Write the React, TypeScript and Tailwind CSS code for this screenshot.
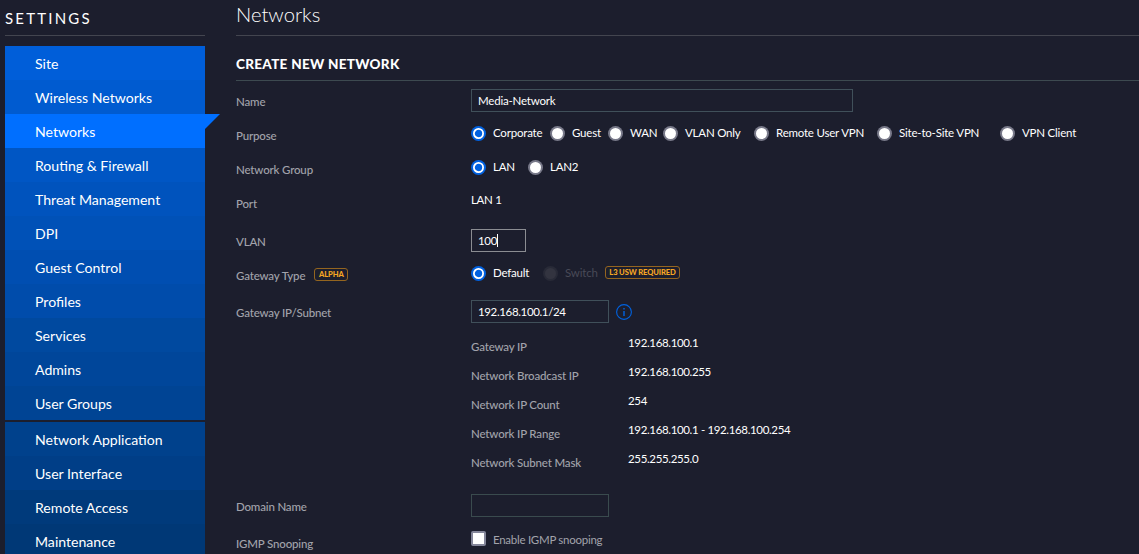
import type { ReactNode } from "react";

const siteItems = [
  { label: "Site", bg: "bg-[#005ed9]" },
  { label: "Wireless Networks", bg: "bg-[#005bd0]" },
  { label: "Networks", bg: "bg-[#006fff]", active: true },
  { label: "Routing & Firewall", bg: "bg-[#0056c4]" },
  { label: "Threat Management", bg: "bg-[#0053bd]" },
  { label: "DPI", bg: "bg-[#0051b7]" },
  { label: "Guest Control", bg: "bg-[#004eb1]" },
  { label: "Profiles", bg: "bg-[#004cab]" },
  { label: "Services", bg: "bg-[#00499f]" },
  { label: "Admins", bg: "bg-[#00469a]" },
  { label: "User Groups", bg: "bg-[#004494]" },
];

const controllerItems = [
  { label: "Network Application", bg: "bg-[#00418c]" },
  { label: "User Interface", bg: "bg-[#003e87]" },
  { label: "Remote Access", bg: "bg-[#003a7b]" },
  { label: "Maintenance", bg: "bg-[#003876]" },
];

function MenuItem({ label, bg, active }: { label: string; bg: string; active?: boolean }) {
  return (
    <a className={`relative flex h-[34px] items-center pl-[30px] pt-[3px] text-[14.1px] leading-none text-white ${bg}`}>
      {label}
      {active && (
        <svg className="absolute left-full top-0" width="15" height="15" viewBox="0 0 15 15">
          <path d="M0 0H15L0 15Z" fill="#006fff" />
        </svg>
      )}
    </a>
  );
}

function Row({ label, height, badge, children }: { label: string; height: string; badge?: string; children?: ReactNode }) {
  return (
    <div className={`flex items-start ${height}`}>
      <div className="flex h-[34px] w-[235px] shrink-0 items-center text-[11.5px] font-medium tracking-[-0.17px] text-[#a2a3ab]">
        <span>{label}</span>
        {badge && <Badge className="ml-[9px] -mt-[3px] w-[34px]">{badge}</Badge>}
      </div>
      {children}
    </div>
  );
}

function Badge({ className, children }: { className: string; children: ReactNode }) {
  return (
    <span className={`flex h-[13px] shrink-0 items-center justify-center whitespace-nowrap rounded-[3px] border border-[#94651f] pt-px text-[7.6px] font-black leading-none tracking-[-0.12px] text-[#f5a623] ${className}`}>
      {children}
    </span>
  );
}

function Radio({ label, width, checked, disabled }: { label: string; width: string; checked?: boolean; disabled?: boolean }) {
  return (
    <label className={`flex shrink-0 items-center text-[11.5px] tracking-[-0.2px] ${disabled ? "text-[#494a57]" : "text-white"} ${width}`}>
      <svg className="mr-[7px] shrink-0" width="15" height="15" viewBox="0 0 15 15">
        {checked ? (
          <>
            <circle cx="7.5" cy="7.5" r="7.5" fill="#0061e0" />
            <circle cx="7.5" cy="7.5" r="4.6" fill="none" stroke="#fff" strokeWidth="1.8" />
          </>
        ) : disabled ? (
          <>
            <circle cx="7.5" cy="7.5" r="7.5" fill="#282a37" />
            <circle cx="7.5" cy="7.5" r="5.5" fill="#333440" />
          </>
        ) : (
          <>
            <circle cx="7.5" cy="7.5" r="7.5" fill="#787989" />
            <circle cx="7.5" cy="7.5" r="5.5" fill="#fff" />
          </>
        )}
      </svg>
      <span className="whitespace-nowrap">{label}</span>
    </label>
  );
}

function Field({ value, className, caret }: { value: string; className: string; caret?: boolean }) {
  return (
    <div className={`mt-[4px] flex h-[23px] shrink-0 items-center border pl-[6px] text-[11.5px] text-white ${className}`}>
      <span>{value}</span>
      {caret && <span className="h-[13px] w-px bg-white" />}
    </div>
  );
}

const purposes = [
  { label: "Corporate", width: "w-[79px]", checked: true },
  { label: "Guest", width: "w-[58px]" },
  { label: "WAN", width: "w-[55px]" },
  { label: "VLAN Only", width: "w-[91px]" },
  { label: "Remote User VPN", width: "w-[123px]" },
  { label: "Site-to-Site VPN", width: "w-[123px]" },
  { label: "VPN Client", width: "w-[100px]" },
];

const details = [
  ["Gateway IP", "192.168.100.1"],
  ["Network Broadcast IP", "192.168.100.255"],
  ["Network IP Count", "254"],
  ["Network IP Range", "192.168.100.1 - 192.168.100.254"],
  ["Network Subnet Mask", "255.255.255.0"],
];

export default function App() {
  return (
    <div className="flex h-[554px] w-[1139px] overflow-hidden bg-[#1c1e2d] pl-[5px] font-['Lato',sans-serif] text-white">
      <aside className="w-[200px] shrink-0">
        <div className="flex h-[36px] items-center border-b border-[#43454f] pt-[2px] text-[15px] leading-none tracking-[2.2px]">
          SETTINGS
        </div>
        <nav className="mt-[10px] flex flex-col">
          {siteItems.map((item) => <MenuItem key={item.label} {...item} />)}
          <div className="h-[2px]" />
          {controllerItems.map((item) => <MenuItem key={item.label} {...item} />)}
        </nav>
      </aside>

      <main className="ml-[31px] min-w-0 flex-1">
        <h1 className="flex h-[36px] items-center border-b border-[#43454f] pb-[6px] text-[20.2px] font-light leading-none">
          Networks
        </h1>
        <h2 className="mb-[4px] flex h-[45px] items-center border-b border-[#3d4a50] pt-[13px] text-[13.5px] font-black leading-none tracking-[0.3px]">
          CREATE NEW NETWORK
        </h2>

        <Row label="Name" height="h-[34px]">
          <Field value="Media-Network" className="w-[382px] border-[#40505a] tracking-[-0.2px]" />
        </Row>
        <Row label="Purpose" height="h-[34px]">
          <div className="flex h-[28px] items-center">
            {purposes.map((p) => <Radio key={p.label} {...p} />)}
          </div>
        </Row>
        <Row label="Network Group" height="h-[34px]">
          <div className="flex h-[28px] items-center">
            <Radio label="LAN" width="w-[57px]" checked />
            <Radio label="LAN2" width="w-[60px]" />
          </div>
        </Row>
        <Row label="Port" height="h-[38px]">
          <div className="flex h-[26px] items-center text-[11.5px] tracking-[-0.3px]">LAN 1</div>
        </Row>
        <Row label="VLAN" height="h-[34px]">
          <Field value="100" className="w-[55px] border-[#8b8d92] tracking-[-0.3px]" caret />
        </Row>
        <Row label="Gateway Type" height="h-[37px]" badge="ALPHA">
          <div className="flex h-[28px] items-center">
            <Radio label="Default" width="w-[72px]" checked />
            <Radio label="Switch" width="w-[62px]" disabled />
            <Badge className="-mt-[2px] w-[75px]">L3 USW REQUIRED</Badge>
          </div>
        </Row>
        <Row label="Gateway IP/Subnet" height="h-[36px]">
          <Field value="192.168.100.1/24" className="w-[138px] border-[#40505a] tracking-[-0.36px]" />
          <svg className="ml-[7px] mt-[8px]" width="16" height="16" viewBox="0 0 16 16" fill="none" stroke="#0062e0">
            <circle cx="8" cy="8" r="7.4" strokeWidth="1.1" />
            <path d="M8 4V5.5M8 7V12" strokeWidth="1.4" />
          </svg>
        </Row>

        <dl className="ml-[235px] flex h-[158px] flex-col text-[11.5px]">
          {details.map(([name, value]) => (
            <div key={name} className="flex h-[29px] items-start">
              <dt className="flex h-[29px] w-[157px] items-center font-medium tracking-[-0.17px] text-[#a2a3ab]">{name}</dt>
              <dd className="flex h-[22px] items-center tracking-[-0.35px]">{value}</dd>
            </div>
          ))}
        </dl>

        <Row label="Domain Name" height="h-[37px]">
          <Field value="" className="w-[138px] border-[#3a4b4e]" />
        </Row>
        <Row label="IGMP Snooping" height="h-[34px]">
          <label className="mt-[4px] flex items-center text-[11.5px] tracking-[-0.27px] text-[#a2a3ab]">
            <span className="-mt-[2px] mr-[7px] size-[15px] rounded-[2px] border-2 border-[#84869a] bg-white" />
            Enable IGMP snooping
          </label>
        </Row>
      </main>
    </div>
  );
}
